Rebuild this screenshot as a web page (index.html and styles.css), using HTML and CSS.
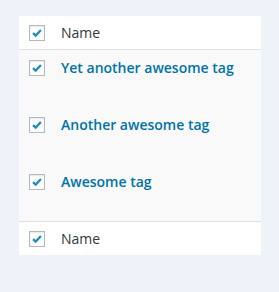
FILE: index.html
```html
<!DOCTYPE html>
<html lang="en">
<head>
    <meta charset="UTF-8">
    <title>Tags</title>
    <link rel="stylesheet" href="styles.css">
</head>
<body>
    <div class="table">
        <div class="row head">
            <span class="check"><svg viewBox="0 0 16 16"><path d="M3.5 8.2 6.5 11 12.5 4.5"/></svg></span>
            <span class="name">Name</span>
        </div>
        <div class="body">
            <div class="row item">
                <span class="check"><svg viewBox="0 0 16 16"><path d="M3.5 8.2 6.5 11 12.5 4.5"/></svg></span>
                <a class="tag" href="#">Yet another awesome tag</a>
            </div>
            <div class="row item">
                <span class="check"><svg viewBox="0 0 16 16"><path d="M3.5 8.2 6.5 11 12.5 4.5"/></svg></span>
                <a class="tag" href="#">Another awesome tag</a>
            </div>
            <div class="row item">
                <span class="check"><svg viewBox="0 0 16 16"><path d="M3.5 8.2 6.5 11 12.5 4.5"/></svg></span>
                <a class="tag" href="#">Awesome tag</a>
            </div>
        </div>
        <div class="row foot">
            <span class="check"><svg viewBox="0 0 16 16"><path d="M3.5 8.2 6.5 11 12.5 4.5"/></svg></span>
            <span class="name">Name</span>
        </div>
    </div>
</body>
</html>
```

FILE: styles.css
```css
body {
    margin: 0;
    padding: 16px 18px 37px 19px;
    background-color: #eef2f9;
    font-family: "Open Sans", sans-serif;
    font-size: 14px;
    color: #32373c;
}
.table {
    width: 242px;
}
.row {
    display: flex;
    align-items: center;
    padding-left: 10px;
}
.head, .foot {
    background-color: #fff;
    height: 33px;
}
.head {
    border-bottom: 1px solid #e1e1e1;
}
.foot {
    border-top: 1px solid #e1e1e1;
}
.body {
    background-color: #f9f9f9;
}
.item {
    height: 57px;
    align-items: flex-start;
    padding-top: 10px;
    box-sizing: border-box;
}
.check {
    width: 14px;
    height: 14px;
    border: 1px solid #b4b9be;
    background-color: #fff;
    box-shadow: inset 0 1px 2px rgba(0, 0, 0, 0.1);
    display: flex;
}
.check svg {
    width: 14px;
    height: 14px;
}
.check path {
    fill: none;
    stroke: #1e8cbe;
    stroke-width: 2.6;
}
.name, .tag {
    margin-left: 16px;
    line-height: 16px;
}
.tag {
    color: #0073aa;
    font-weight: 600;
    text-decoration: none;
}
```
